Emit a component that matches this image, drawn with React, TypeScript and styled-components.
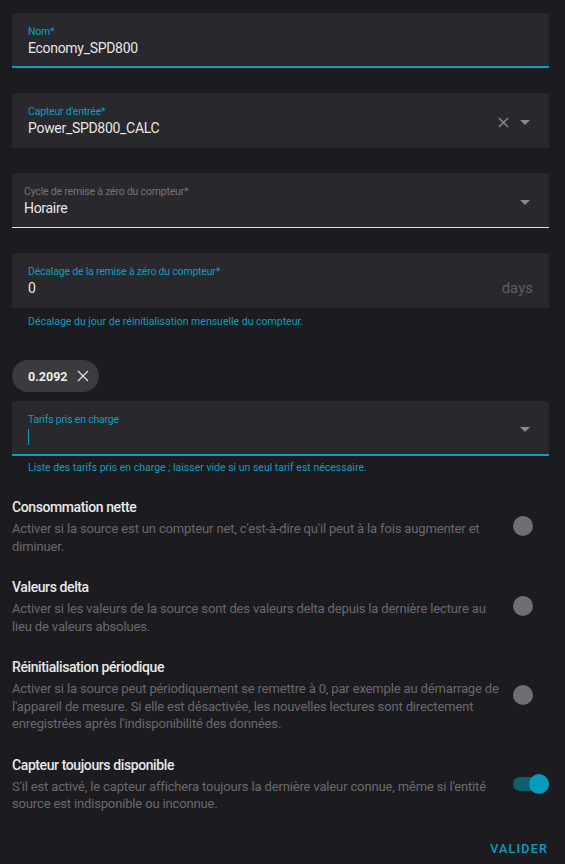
import React from "react";
import styled, { createGlobalStyle } from "styled-components";

const PRIMARY = "#0a9fbf";

const Global = createGlobalStyle`
  html, body { margin: 0; padding: 0; background: #1c1b1f; }
  body { font-family: Roboto, "Noto Sans", sans-serif; -webkit-font-smoothing: antialiased; }
`;

const Page = styled.div`
  width: 565px;
  min-height: 864px;
  box-sizing: border-box;
  padding: 13px 16px 0 12px;
  display: flex;
  flex-direction: column;
`;

const Field = styled.div<{ $underline?: "focus" | "plain" | "none"; $pad?: number; $mt?: number }>`
  margin-top: ${(p) => p.$mt ?? 0}px;
  height: 55px;
  box-sizing: border-box;
  background: #29282d;
  border-radius: 4px 4px 0 0;
  padding: 0 16px 0 ${(p) => p.$pad ?? 16}px;
  display: flex;
  align-items: flex-start;
  border-bottom: ${(p) =>
    p.$underline === "focus"
      ? `2px solid ${PRIMARY}`
      : p.$underline === "plain"
      ? "1px solid #e3e3e3"
      : "none"};
`;

const FieldBody = styled.div`
  flex: 1;
  display: flex;
  flex-direction: column;
  padding-top: 11.5px;
`;

const Label = styled.span<{ $focused?: boolean }>`
  font-size: 10.5px;
  line-height: 14px;
  letter-spacing: -0.2px;
  color: ${(p) => (p.$focused ? PRIMARY : "#75747a")};
`;

const Value = styled.span`
  font-size: 14px;
  line-height: 20px;
  letter-spacing: -0.3px;
  color: #e6e6e6;
  margin-top: -1px;
`;

const Cursor = styled.span`
  display: block;
  width: 1px;
  height: 16px;
  background: ${PRIMARY};
  margin-top: 2px;
`;

const Suffix = styled.span`
  font-size: 15px;
  line-height: 20px;
  color: #5f5e62;
  margin-top: 24.5px;
`;

const Icons = styled.div`
  display: flex;
  align-items: center;
  align-self: center;
  gap: 11px;
  margin-top: 4px;
  margin-right: 3px;
`;

const Helper = styled.div<{ $mt?: number }>`
  font-size: 10.5px;
  line-height: 14px;
  letter-spacing: 0;
  color: ${PRIMARY};
  padding-left: 16px;
  margin-top: ${(p) => p.$mt ?? 7}px;
`;

const Chip = styled.div`
  align-self: flex-start;
  margin-top: 31px;
  height: 32px;
  box-sizing: border-box;
  padding: 0 10px 0 16px;
  border-radius: 16px;
  background: #3b3a3e;
  display: flex;
  align-items: center;
  gap: 10px;
  color: #ececec;
  font-size: 12.5px;
  font-weight: 700;
`;

const ToggleRow = styled.div<{ $mt: number }>`
  margin-top: ${(p) => p.$mt}px;
  display: flex;
  align-items: center;
  gap: 6px;
`;

const ToggleText = styled.div`
  flex: 1;
  display: flex;
  flex-direction: column;
`;

const ToggleTitle = styled.span`
  font-size: 14px;
  font-weight: 500;
  line-height: 20px;
  letter-spacing: -0.4px;
  color: #e8e8e8;
`;

const ToggleDesc = styled.span`
  font-size: 13px;
  line-height: 17.5px;
  letter-spacing: -0.15px;
  color: #6a696d;
  margin-top: 3px;
`;

const SwitchBox = styled.div`
  position: relative;
  width: 36px;
  height: 20px;
  flex: none;
`;

const Track = styled.div<{ $on?: boolean }>`
  position: absolute;
  left: 0;
  right: 0;
  top: 3px;
  height: 14px;
  border-radius: 7px;
  background: ${(p) => (p.$on ? "#0e5f70" : "transparent")};
`;

const Thumb = styled.div<{ $on?: boolean }>`
  position: absolute;
  top: 0;
  left: ${(p) => (p.$on ? 16 : 0)}px;
  width: 20px;
  height: 20px;
  border-radius: 50%;
  background: ${(p) => (p.$on ? "#039cbd" : "#6f6e72")};
`;

const Footer = styled.div`
  display: flex;
  justify-content: flex-end;
  margin-top: 28px;
  padding-right: 1px;
`;

const Button = styled.button`
  background: none;
  border: none;
  padding: 0;
  font-family: inherit;
  font-size: 12.5px;
  line-height: 16px;
  font-weight: 500;
  letter-spacing: 1.2px;
  color: ${PRIMARY};
`;

const Caret = () => (
  <svg width="10" height="5" viewBox="0 0 10 5">
    <path d="M0 0 L10 0 L5 5 Z" fill="#8a898d" />
  </svg>
);

const Cross = ({ size = 11, color = "#8a898d", sw = 1.6 }: { size?: number; color?: string; sw?: number }) => (
  <svg width={size} height={size} viewBox="0 0 12 12">
    <path d="M1 1 L11 11 M11 1 L1 11" stroke={color} strokeWidth={sw} fill="none" />
  </svg>
);

const Switch = ({ on }: { on?: boolean }) => (
  <SwitchBox>
    <Track $on={on} />
    <Thumb $on={on} />
  </SwitchBox>
);

const toggles = [
  {
    title: "Consommation nette",
    desc: "Activer si la source est un compteur net, c'est-à-dire qu'il peut à la fois augmenter et diminuer.",
    on: false,
    mt: 22,
  },
  {
    title: "Valeurs delta",
    desc: "Activer si les valeurs de la source sont des valeurs delta depuis la dernière lecture au lieu de valeurs absolues.",
    on: false,
    mt: 22,
  },
  {
    title: "Réinitialisation périodique",
    desc: "Activer si la source peut périodiquement se remettre à 0, par exemple au démarrage de l'appareil de mesure. Si elle est désactivée, les nouvelles lectures sont directement enregistrées après l'indisponibilité des données.",
    on: false,
    mt: 22,
  },
  {
    title: "Capteur toujours disponible",
    desc: "S'il est activé, le capteur affichera toujours la dernière valeur connue, même si l'entité source est indisponible ou inconnue.",
    on: true,
    mt: 22,
  },
];

export default function App() {
  return (
    <Page>
      <Global />
      <Field $underline="focus">
        <FieldBody>
          <Label $focused>Nom*</Label>
          <Value>Economy_SPD800</Value>
        </FieldBody>
      </Field>

      <Field $mt={25} $underline="none">
        <FieldBody>
          <Label $focused>Capteur d'entrée*</Label>
          <Value>Power_SPD800_CALC</Value>
        </FieldBody>
        <Icons>
          <Cross />
          <Caret />
        </Icons>
      </Field>

      <Field $mt={25} $underline="plain" $pad={12}>
        <FieldBody>
          <Label>Cycle de remise à zéro du compteur*</Label>
          <Value>Horaire</Value>
        </FieldBody>
        <Icons>
          <Caret />
        </Icons>
      </Field>

      <Field $mt={25} $underline="none">
        <FieldBody>
          <Label $focused>Décalage de la remise à zéro du compteur*</Label>
          <Value>0</Value>
        </FieldBody>
        <Suffix>days</Suffix>
      </Field>
      <Helper>Décalage du jour de réinitialisation mensuelle du compteur.</Helper>

      <Chip>
        0.2092
        <Cross size={12} color="#e0e0e0" sw={1.3} />
      </Chip>

      <Field $mt={9} $underline="focus">
        <FieldBody>
          <Label $focused>Tarifs pris en charge</Label>
          <Cursor />
        </FieldBody>
        <Icons>
          <Caret />
        </Icons>
      </Field>
      <Helper $mt={5}>Liste des tarifs pris en charge ; laisser vide si un seul tarif est nécessaire.</Helper>

      {toggles.map((t) => (
        <ToggleRow key={t.title} $mt={t.mt}>
          <ToggleText>
            <ToggleTitle>{t.title}</ToggleTitle>
            <ToggleDesc>{t.desc}</ToggleDesc>
          </ToggleText>
          <Switch on={t.on} />
        </ToggleRow>
      ))}

      <Footer>
        <Button>VALIDER</Button>
      </Footer>
    </Page>
  );
}
